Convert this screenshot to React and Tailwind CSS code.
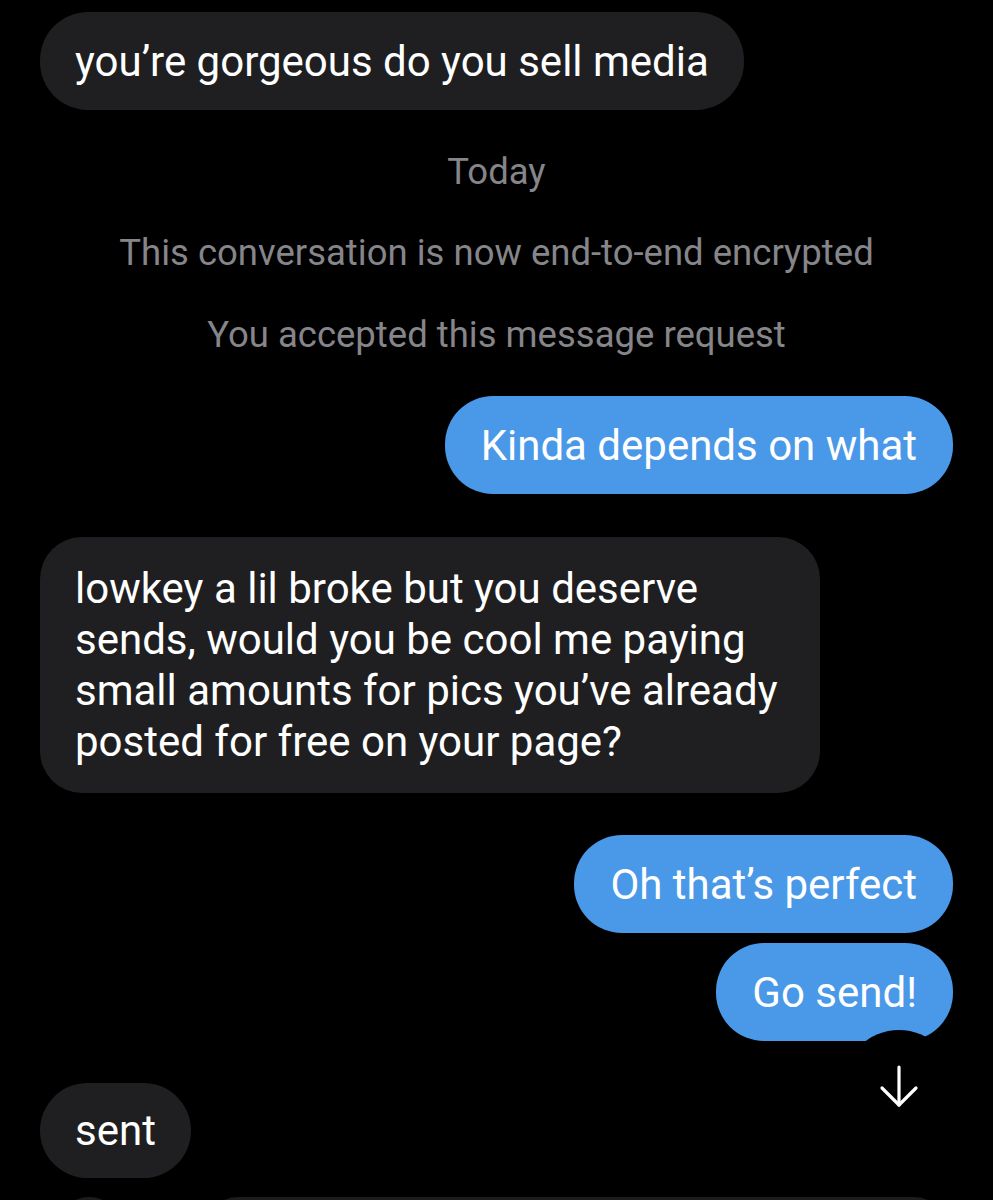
const FONT = { fontFamily: 'Roboto, "Open Sans", sans-serif' }

function Incoming({ children, className = '' }) {
  return (
    <div className="flex justify-start">
      <div className={`bg-[#1f1f21] text-white text-[42px] leading-[51px] ${className}`}>
        {children}
      </div>
    </div>
  )
}

function Outgoing({ children, className = '' }) {
  return (
    <div className="flex justify-end">
      <div className={`bg-[#4a98e8] text-white text-[42px] leading-[51px] rounded-[48px] px-[36px] py-[23.5px] ${className}`}>
        {children}
      </div>
    </div>
  )
}

function Notice({ children, className = '' }) {
  return (
    <p className={`text-center text-[#85858a] text-[36.5px] leading-[40px] ${className}`}>{children}</p>
  )
}

export default function App() {
  return (
    <div className="relative h-[1200px] w-full overflow-hidden bg-black px-[40px] pt-[12px]" style={FONT}>
      <Incoming className="rounded-[48px] px-[35px] py-[23.5px]">
        you’re gorgeous do you sell media
      </Incoming>

      <Notice className="mt-[42px]">Today</Notice>
      <Notice className="mt-[41px]">This conversation is now end-to-end encrypted</Notice>
      <Notice className="mt-[42px]">You accepted this message request</Notice>

      <Outgoing className="mt-[41px]">Kinda depends on what</Outgoing>

      <div className="mt-[43px]">
        <Incoming className="rounded-[42px] px-[35px] py-[26px] w-[780px]">
          lowkey a lil broke but you deserve sends, would you be cool me paying small amounts for pics you’ve already posted for free on your page?
        </Incoming>
      </div>

      <div className="mt-[42px]">
        <Outgoing>Oh that’s perfect</Outgoing>
      </div>
      <div className="mt-[10px]">
        <Outgoing>Go send!</Outgoing>
      </div>

      <div className="mt-[42px]">
        <Incoming className="rounded-[48px] px-[35px] py-[22px]">sent</Incoming>
      </div>

      {/* composer, only its top edge shows */}
      <div className="mt-[19px] flex items-start gap-[85px] pl-[17px]">
        <div className="h-[64px] w-[64px] rounded-full bg-[#1c1c1e]" />
        <div className="h-[64px] w-[740px] rounded-full bg-[#1c1c1e]" />
      </div>

      {/* scroll-to-bottom button */}
      <div className="absolute left-[843px] top-[1030px] flex h-[112px] w-[112px] items-center justify-center rounded-full bg-black">
        <svg width="40" height="44" viewBox="0 0 40 44" fill="none" stroke="white" strokeWidth="3.2" strokeLinecap="round" strokeLinejoin="round">
          <path d="M20 3v38" />
          <path d="M3 24l17 17 17-17" />
        </svg>
      </div>
    </div>
  )
}
